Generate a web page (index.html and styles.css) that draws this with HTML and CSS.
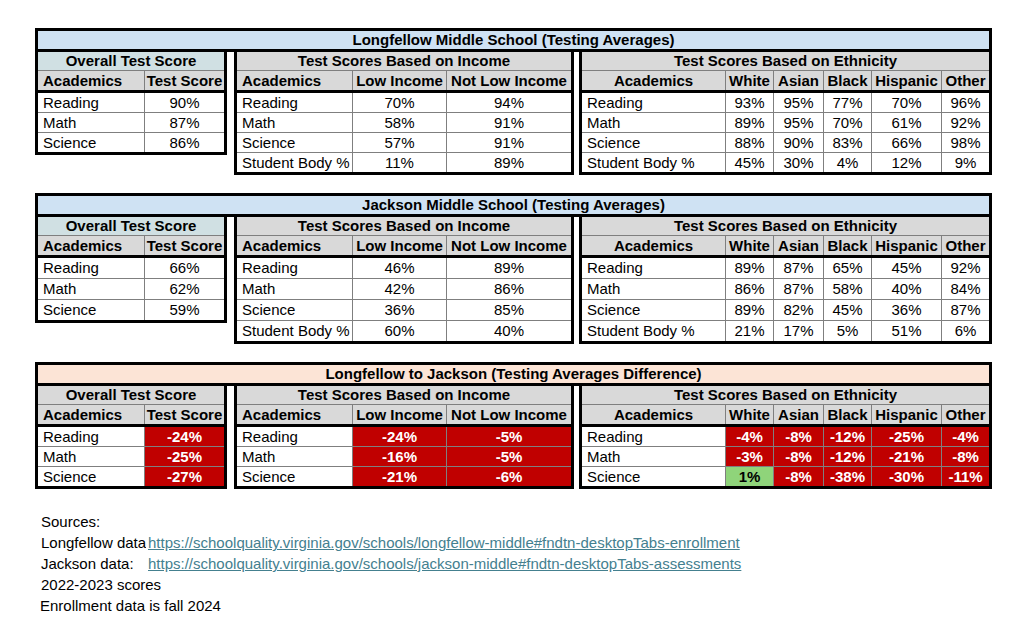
FILE: index.html
```html
<!DOCTYPE html>
<html lang="en">
<head>
<meta charset="utf-8">
<title>Longfellow vs Jackson Testing Averages</title>
<link rel="stylesheet" href="styles.css">
</head>
<body>
<main class="page">

  <section class="sheet">
    <div class="title blue">Longfellow Middle School (Testing Averages)</div>
    <div class="blocks">
      <div class="block b1">
        <div class="grid head">
          <div class="grp cyan">Overall Test Score</div>
          <div class="ch l">Academics</div><div class="ch">Test Score</div>
        </div>
        <div class="grid body">
          <div class="lbl">Reading</div><div>90%</div>
          <div class="lbl">Math</div><div>87%</div>
          <div class="lbl">Science</div><div>86%</div>
        </div>
      </div>
      <div class="block b2">
        <div class="grid head">
          <div class="grp">Test Scores Based on Income</div>
          <div class="ch l">Academics</div><div class="ch">Low Income</div><div class="ch">Not Low Income</div>
        </div>
        <div class="grid body">
          <div class="lbl">Reading</div><div>70%</div><div>94%</div>
          <div class="lbl">Math</div><div>58%</div><div>91%</div>
          <div class="lbl">Science</div><div>57%</div><div>91%</div>
          <div class="lbl">Student Body %</div><div>11%</div><div>89%</div>
        </div>
      </div>
      <div class="block b3">
        <div class="grid head">
          <div class="grp">Test Scores Based on Ethnicity</div>
          <div class="ch">Academics</div><div class="ch">White</div><div class="ch">Asian</div><div class="ch">Black</div><div class="ch">Hispanic</div><div class="ch">Other</div>
        </div>
        <div class="grid body">
          <div class="lbl">Reading</div><div>93%</div><div>95%</div><div>77%</div><div>70%</div><div>96%</div>
          <div class="lbl">Math</div><div>89%</div><div>95%</div><div>70%</div><div>61%</div><div>92%</div>
          <div class="lbl">Science</div><div>88%</div><div>90%</div><div>83%</div><div>66%</div><div>98%</div>
          <div class="lbl">Student Body %</div><div>45%</div><div>30%</div><div>4%</div><div>12%</div><div>9%</div>
        </div>
      </div>
    </div>
  </section>

  <section class="sheet tall">
    <div class="title blue">Jackson Middle School (Testing Averages)</div>
    <div class="blocks">
      <div class="block b1">
        <div class="grid head">
          <div class="grp cyan">Overall Test Score</div>
          <div class="ch l">Academics</div><div class="ch">Test Score</div>
        </div>
        <div class="grid body">
          <div class="lbl">Reading</div><div>66%</div>
          <div class="lbl">Math</div><div>62%</div>
          <div class="lbl">Science</div><div>59%</div>
        </div>
      </div>
      <div class="block b2">
        <div class="grid head">
          <div class="grp">Test Scores Based on Income</div>
          <div class="ch l">Academics</div><div class="ch">Low Income</div><div class="ch">Not Low Income</div>
        </div>
        <div class="grid body">
          <div class="lbl">Reading</div><div>46%</div><div>89%</div>
          <div class="lbl">Math</div><div>42%</div><div>86%</div>
          <div class="lbl">Science</div><div>36%</div><div>85%</div>
          <div class="lbl">Student Body %</div><div>60%</div><div>40%</div>
        </div>
      </div>
      <div class="block b3">
        <div class="grid head">
          <div class="grp">Test Scores Based on Ethnicity</div>
          <div class="ch">Academics</div><div class="ch">White</div><div class="ch">Asian</div><div class="ch">Black</div><div class="ch">Hispanic</div><div class="ch">Other</div>
        </div>
        <div class="grid body">
          <div class="lbl">Reading</div><div>89%</div><div>87%</div><div>65%</div><div>45%</div><div>92%</div>
          <div class="lbl">Math</div><div>86%</div><div>87%</div><div>58%</div><div>40%</div><div>84%</div>
          <div class="lbl">Science</div><div>89%</div><div>82%</div><div>45%</div><div>36%</div><div>87%</div>
          <div class="lbl">Student Body %</div><div>21%</div><div>17%</div><div>5%</div><div>51%</div><div>6%</div>
        </div>
      </div>
    </div>
  </section>

  <section class="sheet diff">
    <div class="title peach">Longfellow to Jackson (Testing Averages Difference)</div>
    <div class="blocks">
      <div class="block b1">
        <div class="grid head">
          <div class="grp">Overall Test Score</div>
          <div class="ch l">Academics</div><div class="ch">Test Score</div>
        </div>
        <div class="grid body">
          <div class="lbl">Reading</div><div class="neg">-24%</div>
          <div class="lbl">Math</div><div class="neg">-25%</div>
          <div class="lbl">Science</div><div class="neg">-27%</div>
        </div>
      </div>
      <div class="block b2">
        <div class="grid head">
          <div class="grp">Test Scores Based on Income</div>
          <div class="ch l">Academics</div><div class="ch">Low Income</div><div class="ch">Not Low Income</div>
        </div>
        <div class="grid body">
          <div class="lbl">Reading</div><div class="neg">-24%</div><div class="neg">-5%</div>
          <div class="lbl">Math</div><div class="neg">-16%</div><div class="neg">-5%</div>
          <div class="lbl">Science</div><div class="neg">-21%</div><div class="neg">-6%</div>
        </div>
      </div>
      <div class="block b3">
        <div class="grid head">
          <div class="grp">Test Scores Based on Ethnicity</div>
          <div class="ch">Academics</div><div class="ch">White</div><div class="ch">Asian</div><div class="ch">Black</div><div class="ch">Hispanic</div><div class="ch">Other</div>
        </div>
        <div class="grid body">
          <div class="lbl">Reading</div><div class="neg">-4%</div><div class="neg">-8%</div><div class="neg">-12%</div><div class="neg">-25%</div><div class="neg">-4%</div>
          <div class="lbl">Math</div><div class="neg">-3%</div><div class="neg">-8%</div><div class="neg">-12%</div><div class="neg">-21%</div><div class="neg">-8%</div>
          <div class="lbl">Science</div><div class="pos">1%</div><div class="neg">-8%</div><div class="neg">-38%</div><div class="neg">-30%</div><div class="neg">-11%</div>
        </div>
      </div>
    </div>
  </section>

  <div class="sources">
    <div class="src-label">Sources:</div><div></div>
    <div class="src-label">Longfellow data:</div><div><a class="link" href="#">https://schoolquality.virginia.gov/schools/longfellow-middle#fndtn-desktopTabs-enrollment</a></div>
    <div class="src-label">Jackson data:</div><div><a class="link" href="#">https://schoolquality.virginia.gov/schools/jackson-middle#fndtn-desktopTabs-assessments</a></div>
    <div class="src-label wide">2022-2023 scores</div>
    <div class="src-label wide">Enrollment data is fall 2024</div>
  </div>

</main>
</body>
</html>
```

FILE: styles.css
```css
* { box-sizing: border-box; }

html, body {
  margin: 0;
  padding: 0;
  background: #ffffff;
}

body {
  font-family: "Liberation Sans", Arial, sans-serif;
  font-size: 15px;
  color: #000;
}

.page {
  padding: 28px 0 0 35px;
  width: 1000px;
}

.sheet {
  width: 957px;
  display: flex;
  flex-direction: column;
}

.sheet + .sheet {
  margin-top: 18px;
}

.title {
  border: 3px solid #000;
  height: 24px;
  line-height: 18px;
  text-align: center;
  font-weight: bold;
}

.blue { background: #cfe2f3; }
.peach { background: #fce4d6; }

.blocks {
  display: flex;
  align-items: flex-start;
}

.block {
  border: 3px solid #000;
  border-top: 0;
}

.b2 { margin-left: 7px; }
.b3 { margin-left: 5px; }

.grid {
  display: grid;
  gap: 1px;
  background: #7f7f7f;
}

.b1 .grid { grid-template-columns: 106px 79px; }
.b2 .grid { grid-template-columns: 115px 93px 124px; }
.b3 .grid { grid-template-columns: 143px 47px 49px 47px 69px 47px; }

.grid > div {
  white-space: nowrap;
  overflow: hidden;
  text-align: center;
  background: #fff;
}

.head {
  border-bottom: 3px solid #000;
}

.head > div {
  background: #d9d9d9;
  font-weight: bold;
}

.head .grp {
  grid-column: 1 / -1;
  height: 18px;
  line-height: 18px;
}

.head .cyan { background: #d0e0e3; }

.head .ch {
  height: 19px;
  line-height: 19px;
}

.head .l {
  text-align: left;
  padding-left: 5px;
}

.body > div {
  height: 19px;
  line-height: 19px;
}

.tall .body > div {
  height: 20px;
  line-height: 20px;
}

.grid > .lbl {
  text-align: left;
  padding-left: 5px;
}

.grid > .neg {
  background: #c00000;
  color: #fff;
  font-weight: bold;
}

.grid > .pos {
  background: #8fd47a;
  color: #000;
  font-weight: bold;
}

.sources {
  margin-top: 22px;
  margin-left: 3px;
  display: grid;
  grid-template-columns: 108px auto;
  line-height: 21px;
}

.src-label {
  padding-left: 3px;
  white-space: nowrap;
  overflow: hidden;
}

.src-label.wide {
  grid-column: 1 / -1;
}

.sources > div:nth-child(even) {
  padding-left: 2px;
  white-space: nowrap;
}

.link {
  color: #44808f;
  text-decoration: underline;
}
```
